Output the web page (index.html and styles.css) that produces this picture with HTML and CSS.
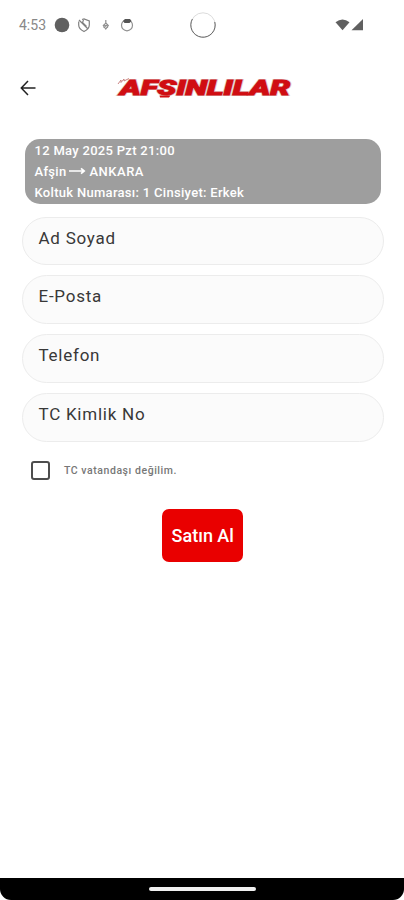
FILE: index.html
```
<!DOCTYPE html>
<html lang="tr">
<head>
<meta charset="utf-8">
<title>Afşinlılar</title>
<link rel="stylesheet" href="styles.css">
</head>
<body>
<div class="screen">
  <div class="status">
    <span class="clock">4:53</span>
    <svg class="status-icons" width="66" height="18" viewBox="0 0 66 18">
      <circle cx="8" cy="9" r="7.3" fill="#606060"/>
      <g fill="none" stroke="#808080" stroke-width="1.2">
        <path d="M28 3.500L30 3l5.300 2v4c0 3-2.200 5-5.300 6.500C26.900 14 24.700 12 24.700 9V5.500M25 4l9 9M29.500 4l-1 2.500 4 4"/>
        <path d="M51.800 4v3M51.800 7l2.500 2.500-2.500 3.500-2.500-3.500zM49.500 8.500l4.500 3M54 8.500l-4.500 3" stroke="#909090"/>
      </g>
    </svg>
    <svg class="face" width="14" height="18" viewBox="0 0 14 18">
      <circle cx="7" cy="9.300" r="5.500" fill="none" stroke="#909090" stroke-width="1.200"/>
      <path d="M3 5L5 3h5l1.500 2-2 2h-5z" fill="#555"/>
    </svg>
    <svg class="camera" width="28" height="28" viewBox="0 0 28 28">
      <circle cx="14" cy="14" r="12.200" fill="#fff" stroke="#ccc" stroke-width=".7"/>
      <path d="M3.400 8A12.200 12.200 0 1 0 25.800 11" fill="none" stroke="#666" stroke-width="1"/>
    </svg>
    <svg class="signal" width="30" height="16" viewBox="0 0 30 16">
      <path d="M.5 5.300Q7.500 -.5 14.500 5.300L7.500 13.300z" fill="#606060"/>
      <path d="M28 2v11.300H16.500z" fill="#606060"/>
    </svg>
  </div>
  <header class="header">
    <svg class="back" width="16" height="16" viewBox="0 0 16 16">
      <path d="M8 1L1.300 8 8 15M1.500 8H15.500" fill="none" stroke="#222" stroke-width="1.500"/>
    </svg>
    <svg class="logo" width="178" height="26" viewBox="0 0 178 26">
      <text class="brand brand-edge" x="4" y="20" textLength="170" lengthAdjust="spacingAndGlyphs">AFSINLILAR</text>
      <text class="brand" x="4" y="20" textLength="170" lengthAdjust="spacingAndGlyphs">AFSINLILAR</text>
      <path d="M43.500 20.500h11l-1.500 2h-9z" fill="#d00d12"/>
      <path d="M2 9l3-4v2.500l3-3.500v2l5-2.500" fill="none" stroke="#c47777" stroke-width=".9"/>
    </svg>
  </header>
  <main class="content">
    <section class="trip">
      <div class="date">12 May 2025 Pzt 21:00</div>
      <div class="route"><span>Afşin</span><svg width="17" height="8" viewBox="0 0 17 8"><path d="M0 4h15M12 1.300L15.200 4 12 6.700" fill="none" stroke="#fff" stroke-width="1.700"/></svg><span class="destination">ANKARA</span></div>
      <div class="seat">Koltuk Numarası: 1 Cinsiyet: Erkek</div>
    </section>
    <form class="form">
      <div class="field"><span class="name">Ad Soyad</span></div>
      <div class="field"><span class="mail">E-Posta</span></div>
      <div class="field"><span class="phone">Telefon</span></div>
      <div class="field"><span class="identity">TC Kimlik No</span></div>
      <label class="check"><span class="box"></span><span>TC vatandaşı değilim.</span></label>
      <button class="buy" type="button">Satın Al</button>
    </form>
  </main>
  <footer class="nav"><div class="nav-inner"><span class="pill"></span></div></footer>
</div>
</body>
</html>
```
FILE: styles.css
```
* { box-sizing: border-box; }
body { margin: 0; background: #fff; font-family: Roboto, "Liberation Sans", sans-serif; }
svg { display: block; flex: none; }
.screen { width: 404px; height: 900px; display: flex; flex-direction: column; overflow: hidden; }
.status { height: 50px; display: flex; align-items: center; padding-left: 19px; }
.clock { width: 35px; font-size: 14px; color: #888; white-space: nowrap; }
.camera { margin-left: 54.500px; margin-top: -1px; }
.signal { margin-left: 118.500px; margin-top: -1px; }
.header { height: 76px; display: flex; align-items: center; padding-left: 20px; }
.logo { margin-left: 79.500px; overflow: visible; }
.brand { font: italic 900 19.500px Roboto, sans-serif; fill: #d00d12; stroke: #d00d12; stroke-width: .9px; stroke-linejoin: miter; }
.brand-edge { stroke: #dcc5c5; stroke-width: 2px; }
.content { flex: 1; padding: 13.400px 20px 0 21.500px; }
.trip { height: 64.600px; margin: 0 3px; padding: .5px 10px; border-radius: 15px; background: #9e9e9e; color: #fff; font-size: 13px; font-weight: 500; line-height: 21px; white-space: nowrap; }
.date { letter-spacing: .3px; }
.route { display: flex; align-items: center; letter-spacing: .3px; }
.route svg { margin: 0 3px; }
.destination { letter-spacing: .5px; }
.seat { letter-spacing: .3px; }
.form { display: flex; flex-direction: column; gap: 10px; margin-top: 12.800px; }
.field { height: 48.700px; border: 1px solid #ececec; border-radius: 25px; background: #fbfbfb; padding: 10px 16px 0; font-size: 17px; line-height: 20px; color: #383838; letter-spacing: .75px; }
.check { display: flex; align-items: center; height: 36px; gap: 14.500px; margin-top: 1px; padding-left: 9.500px; font-size: 10.500px; font-weight: 500; letter-spacing: .55px; color: #777; }
.box { width: 18.500px; height: 18.500px; border: 2px solid #4d4d4d; border-radius: 3px; }
.buy { align-self: center; width: 81px; height: 53px; margin-top: 10px; padding: 0; border: 0; border-radius: 7px; background: #e90000; color: #fff; font: 500 18px Roboto, sans-serif; }
.nav { height: 22.500px; background: #fff; }
.nav-inner { height: 100%; display: flex; justify-content: center; padding-top: 9px; background: #000; border-radius: 0 0 11px 11px; }
.pill { width: 107px; height: 4.500px; border-radius: 3px; background: #f0f0f0; }
```
